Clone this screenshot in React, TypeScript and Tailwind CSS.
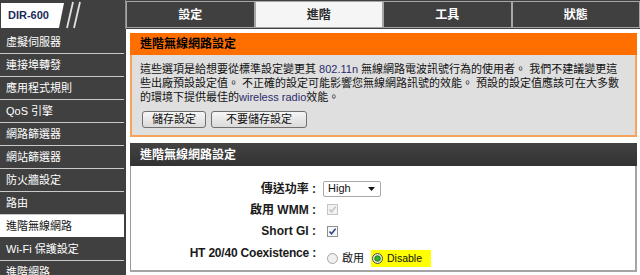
import React from 'react'

const sideItems = [
  '虛擬伺服器',
  '連接埠轉發',
  '應用程式規則',
  'QoS 引擎',
  '網路篩選器',
  '網站篩選器',
  '防火牆設定',
  '路由',
  '進階無線網路',
  'Wi-Fi 保護設定',
  '進階網路',
]

const tabs = [
  { label: '設定', active: false },
  { label: '進階', active: true },
  { label: '工具', active: false },
  { label: '狀態', active: false },
]

function Checkbox({ disabled }: { disabled?: boolean }) {
  return (
    <svg width="11" height="11" viewBox="0 0 11 11" className="block">
      <rect
        x="0.5"
        y="0.5"
        width="10"
        height="10"
        fill={disabled ? '#f2f2f2' : '#f4f6fa'}
        stroke={disabled ? '#c4c4c4' : '#8e8f8f'}
      />
      <path
        d="M2.5 5.5 L4.5 7.8 L8.6 2.8"
        fill="none"
        stroke={disabled ? '#c2c2c2' : '#2a3f7a'}
        strokeWidth="1.4"
      />
    </svg>
  )
}

function Radio({ checked }: { checked?: boolean }) {
  return (
    <svg width="11" height="11" viewBox="0 0 11 11" className="block">
      <circle cx="5.5" cy="5.5" r="5" fill={checked ? '#e9eed8' : '#f0f0f0'} stroke={checked ? '#4a4f3a' : '#a3a3a3'} />
      {checked && <circle cx="5.5" cy="5.5" r="2.8" fill="#2fb32f" stroke="#1b5e1b" strokeWidth="0.8" />}
    </svg>
  )
}

function FormRow({
  label,
  children,
  tall,
  tight,
}: {
  label: string
  children: React.ReactNode
  tall?: boolean
  tight?: boolean
}) {
  return (
    <div className={`grid grid-cols-[185px_1fr] gap-x-[7px] ${tall ? 'h-[23px] items-start' : 'h-[21px] items-center'}`}>
      <span
        className={`text-right text-[12px] font-bold text-[#1a1a1a] leading-[14px] ${tall ? 'mt-[5px]' : ''} ${
          tight ? 'tracking-[-0.2px]' : ''
        }`}
      >
        {label} :
      </span>
      {children}
    </div>
  )
}

export default function App() {
  return (
    <div className="w-[640px] h-[275px] overflow-hidden bg-white flex flex-col [font-family:'Liberation_Sans','Noto_Sans_CJK_TC',sans-serif]">
      <header className="h-[29px] shrink-0 bg-[#404040] flex">
        <div className="w-[126px] flex items-start border-r border-[#8c8c8c]">
          <div className="mt-[3px] ml-[1px] h-[25px] w-[63px] bg-white [clip-path:polygon(0_0,100%_0,92%_100%,0_100%)] flex items-center pl-[7px] text-[11px] font-bold text-[#1d2b5c] leading-none">
            DIR-600
          </div>
          <svg width="20" height="29" viewBox="0 0 20 29" className="ml-[1px] block">
            <line x1="8" y1="2" x2="2" y2="28" stroke="#e0e0e0" strokeWidth="1.8" />
            <line x1="15" y1="2" x2="9" y2="28" stroke="#e0e0e0" strokeWidth="1.8" />
          </svg>
        </div>
        <nav className="flex-1 flex pt-[1px]">
          {tabs.map((t) => (
            <div
              key={t.label}
              className={`flex-1 h-[27px] border border-[#a6a6a6] flex items-center justify-center text-[12px] font-bold leading-none ${
                t.active ? 'bg-[#f5f5f5] text-[#2a2a2a]' : 'text-white'
              }`}
            >
              {t.label}
            </div>
          ))}
        </nav>
      </header>

      <div className="flex flex-1 min-h-0">
        <aside className="w-[126px] shrink-0 bg-[#404040] pt-[2px] pr-[2px]">
          {sideItems.map((item) => {
            const active = item === '進階無線網路'
            return (
              <div
                key={item}
                className={`h-[23px] pl-[6px] flex items-center text-[11px] leading-none border-b ${
                  active ? 'bg-white text-[#111] border-[#404040]' : 'text-white border-[#c9c9c9]'
                }`}
              >
                {item}
              </div>
            )
          })}
        </aside>

        <main className="flex-1 pl-[4px] pr-[3px] pt-[4px]">
          <section>
            <h2 className="h-[22px] bg-[#ff6f00] pl-[10px] flex items-center text-[12px] font-bold text-black leading-none">
              進階無線網路設定
            </h2>
            <div className="bg-[#dfdfdf] border-2 border-t-0 border-[#f7a35c] pl-[8px] pt-[7px] pb-[7px]">
              <p className="text-[11px] leading-[14px] text-[#111] whitespace-nowrap">
                這些選項是給想要從標準設定變更其 <span className="text-[#2c2c6c]">802.11n</span> 無線網路電波訊號行為的使用者。 我們不建議變更這
                <br />
                些出廠預設設定值。 不正確的設定可能影響您無線網路訊號的效能。 預設的設定值應該可在大多數
                <br />
                的環境下提供最佳的<span className="text-[#2c2c6c]">wireless radio</span>效能。
              </p>
              <div className="flex gap-[5px] mt-[7px] ml-[2px]">
                <button className="w-[64px] h-[17px] border border-[#707070] rounded-[3px] bg-linear-to-b from-[#f6f6f6] to-[#dadada] text-[11px] leading-none text-[#111]">
                  儲存設定
                </button>
                <button className="w-[96px] h-[17px] border border-[#707070] rounded-[3px] bg-linear-to-b from-[#f6f6f6] to-[#dadada] text-[11px] leading-none text-[#111]">
                  不要儲存設定
                </button>
              </div>
            </div>
          </section>

          <section className="mt-[6px]">
            <h2 className="h-[23px] bg-linear-to-b from-[#434343] to-[#323232] pl-[10px] flex items-center text-[12px] font-bold text-white leading-none">
              進階無線網路設定
            </h2>
            <div className="border-l border-[#9a9a9a] border-r-2 border-b-2 border-r-[#a4a4a4] border-b-[#a4a4a4] pt-[12px] pb-[6px]">
              <FormRow label="傳送功率">
                <div className="w-[58px] h-[16px] border border-[#a9a9a9] rounded-[2px] bg-white flex items-center justify-between pl-[4px] pr-[5px]">
                  <span className="text-[11px] leading-none text-[#111]">High</span>
                  <svg width="7" height="4" viewBox="0 0 7 4" className="block">
                    <path d="M0 0 H7 L3.5 4 Z" fill="#111" />
                  </svg>
                </div>
              </FormRow>
              <FormRow label="啟用 WMM">
                <div className="ml-[4px]">
                  <Checkbox disabled />
                </div>
              </FormRow>
              <FormRow label="Short GI">
                <div className="ml-[4px] mt-[2px]">
                  <Checkbox />
                </div>
              </FormRow>
              <FormRow label="HT 20/40 Coexistence" tall tight>
                <div className="flex items-center mt-[9px] h-[17px]">
                  <div className="ml-[4px]">
                    <Radio />
                  </div>
                  <span className="ml-[4px] text-[11px] leading-none text-[#111]">啟用</span>
                  <div className="ml-[7px] h-[17px] bg-[#ffff00] flex items-center pl-[1px] pr-[9px]">
                    <Radio checked />
                    <span className="ml-[4px] text-[10.5px] leading-none text-[#111]">Disable</span>
                  </div>
                </div>
              </FormRow>
            </div>
          </section>
        </main>
      </div>
    </div>
  )
}
